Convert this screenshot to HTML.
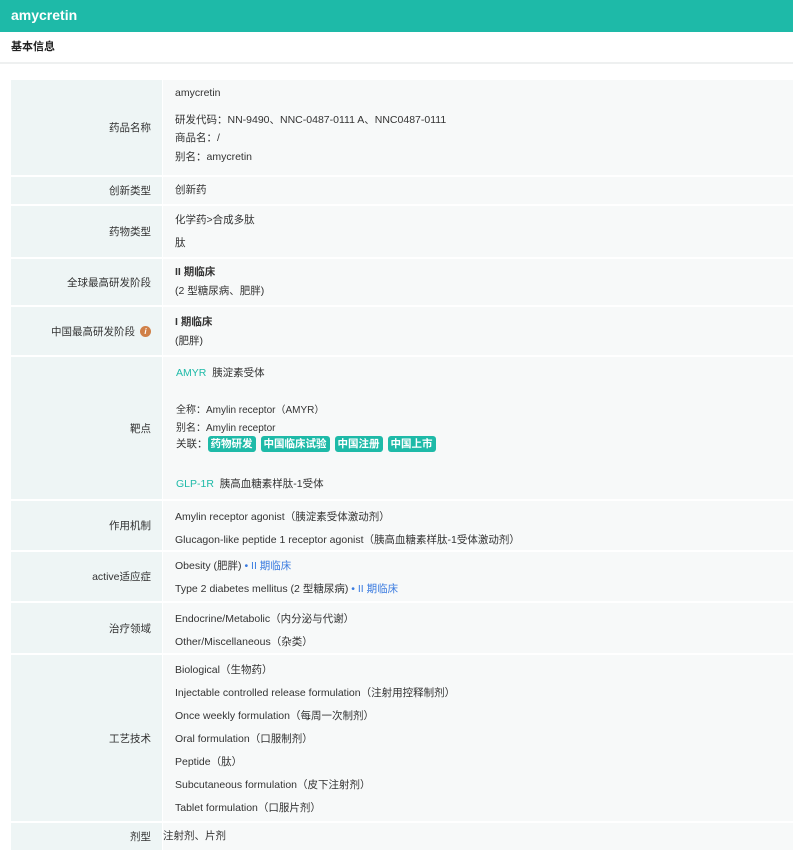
<!DOCTYPE html>
<html><head><meta charset="utf-8"><style>
*{margin:0;padding:0;box-sizing:border-box}
body{width:793px;height:853px;overflow:hidden;background:#fff;font-family:"Liberation Sans","Noto Sans CJK SC",sans-serif;font-size:10.5px;color:#333}
.hdr{height:32px;background:#1ebaa8;color:#fff;font-weight:bold;font-size:14px;line-height:31px;padding-left:11px}
.sec{height:32px;line-height:30px;padding-left:11px;font-weight:bold;font-size:11px;color:#222;border-bottom:2px solid #eef0f0}
.tbl{position:absolute;left:11px;top:80px;width:782px}
.row{display:flex;margin-bottom:2px}
.lab{width:151px;background:#eef5f5;text-align:right;padding-right:11px;display:flex;align-items:center;justify-content:flex-end;color:#333}
.con{flex:1;background:#f7f9f9;margin-left:1px;padding-left:12px;color:#333}
.l{position:absolute;white-space:nowrap}
.tg{display:inline-block;background:#1ebaa8;color:#fff;font-weight:bold;border-radius:3px;padding:0 3px;height:16px;line-height:16px;margin-right:5px}
.teal{color:#1ebaa8}
.blue{color:#3a7be0}
.info{display:inline-block;width:11px;height:11px;border-radius:50%;background:#d08048;color:#fff;font-size:8px;font-style:italic;font-weight:bold;text-align:center;line-height:11px;margin-left:5px}
</style></head><body>
<div class="hdr">amycretin</div>
<div class="sec">基本信息</div>
<div class="tbl">
<div class="row" style="height:95px"><div class="lab">药品名称</div><div class="con" style="position:relative">
<div class="l" style="left:12px;top:7px">amycretin</div>
<div class="l" style="left:12px;top:32px">研发代码：NN-9490、NNC-0487-0111 A、NNC0487-0111</div>
<div class="l" style="left:12px;top:50px">商品名：/</div>
<div class="l" style="left:12px;top:69px">别名：amycretin</div></div></div>
<div class="row" style="height:27px"><div class="lab">创新类型</div><div class="con" style="line-height:27px">创新药</div></div>
<div class="row" style="height:51px"><div class="lab">药物类型</div><div class="con" style="position:relative">
<div class="l" style="left:12px;top:6px">化学药&gt;合成多肽</div><div class="l" style="left:12px;top:29px">肽</div></div></div>
<div class="row" style="height:46px"><div class="lab">全球最高研发阶段</div><div class="con" style="position:relative">
<div class="l" style="left:12px;top:5px;font-weight:bold">II 期临床</div><div class="l" style="left:12px;top:24px">(2 型糖尿病、肥胖)</div></div></div>
<div class="row" style="height:48px"><div class="lab">中国最高研发阶段<span class="info">i</span></div><div class="con" style="position:relative">
<div class="l" style="left:12px;top:7px;font-weight:bold">I 期临床</div><div class="l" style="left:12px;top:26px">(肥胖)</div></div></div>
<div class="row" style="height:142px"><div class="lab">靶点</div><div class="con" style="position:relative">
<div class="l" style="left:13px;top:8px"><span class="teal">AMYR</span>&nbsp;&nbsp;胰淀素受体</div>
<div class="l" style="left:13px;top:44px;font-size:10px">全称：Amylin receptor（AMYR）</div>
<div class="l" style="left:13px;top:62px;font-size:10px">别名：Amylin receptor</div>
<div class="l" style="left:13px;top:79px">关联：<span class="tg">药物研发</span><span class="tg">中国临床试验</span><span class="tg">中国注册</span><span class="tg">中国上市</span></div>
<div class="l" style="left:13px;top:119px"><span class="teal">GLP-1R</span>&nbsp;&nbsp;胰高血糖素样肽-1受体</div></div></div>
<div class="row" style="height:49px"><div class="lab">作用机制</div><div class="con" style="position:relative">
<div class="l" style="left:12px;top:8px">Amylin receptor agonist（胰淀素受体激动剂）</div>
<div class="l" style="left:12px;top:31px">Glucagon-like peptide 1 receptor agonist（胰高血糖素样肽-1受体激动剂）</div></div></div>
<div class="row" style="height:49px"><div class="lab">active适应症</div><div class="con" style="position:relative">
<div class="l" style="left:12px;top:6px">Obesity (肥胖) <span class="blue">• II 期临床</span></div>
<div class="l" style="left:12px;top:29px">Type 2 diabetes mellitus (2 型糖尿病) <span class="blue">• II 期临床</span></div></div></div>
<div class="row" style="height:50px"><div class="lab">治疗领域</div><div class="con" style="position:relative">
<div class="l" style="left:12px;top:8px">Endocrine/Metabolic（内分泌与代谢）</div>
<div class="l" style="left:12px;top:31px">Other/Miscellaneous（杂类）</div></div></div>
<div class="row" style="height:166px"><div class="lab">工艺技术</div><div class="con" style="position:relative">
<div class="l" style="left:12px;top:7px">Biological（生物药）</div>
<div class="l" style="left:12px;top:30px">Injectable controlled release formulation（注射用控释制剂）</div>
<div class="l" style="left:12px;top:53px">Once weekly formulation（每周一次制剂）</div>
<div class="l" style="left:12px;top:76px">Oral formulation（口服制剂）</div>
<div class="l" style="left:12px;top:99px">Peptide（肽）</div>
<div class="l" style="left:12px;top:122px">Subcutaneous formulation（皮下注射剂）</div>
<div class="l" style="left:12px;top:145px">Tablet formulation（口服片剂）</div></div></div>
<div class="row" style="height:27px"><div class="lab">剂型</div><div class="con" style="line-height:27px;padding-left:0">注射剂、片剂</div></div>
</div>
</body></html>
